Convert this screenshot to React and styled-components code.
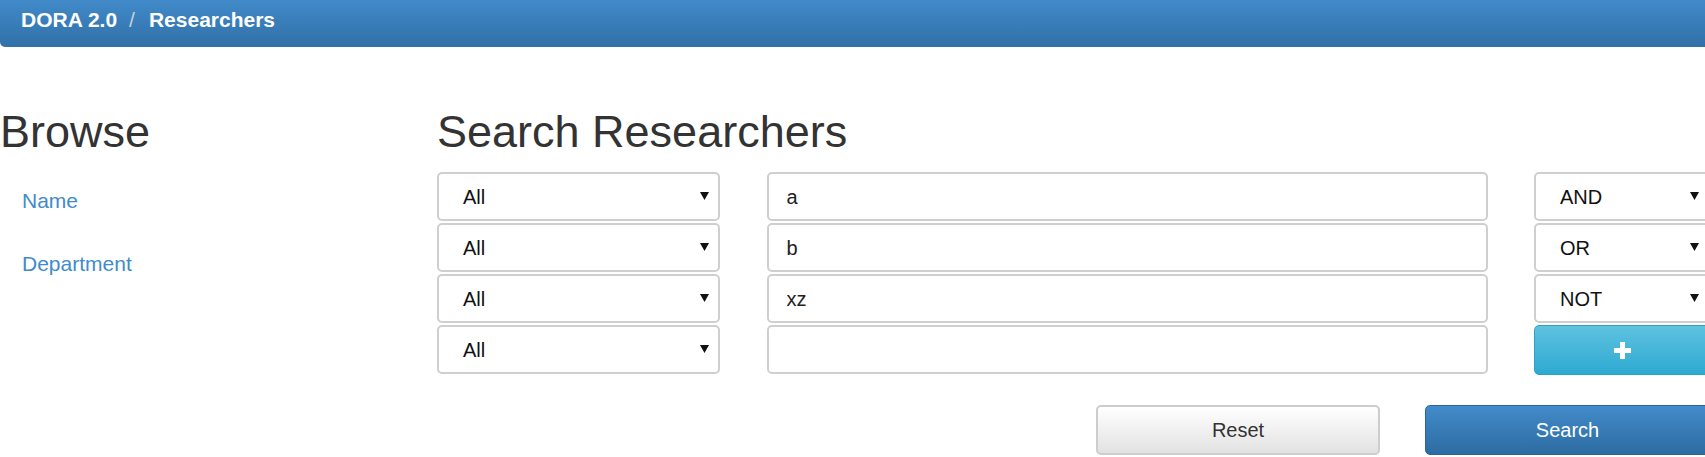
import React from 'react';
import styled, { createGlobalStyle } from 'styled-components';

const GlobalStyle = createGlobalStyle`
    html, body {
        margin: 0;
        padding: 0;
        background: #fff;
        overflow: hidden;
    }
    body {
        font-family: "Liberation Sans", Arial, sans-serif;
        color: #333;
    }
    * {
        box-sizing: border-box;
    }
`;

const criteria = [
    { field: 'All', term: 'a', op: 'AND' },
    { field: 'All', term: 'b', op: 'OR' },
    { field: 'All', term: 'xz', op: 'NOT' },
    { field: 'All', term: '', op: null },
];

const Arrow = () => (
    <svg width="9" height="8" viewBox="0 0 9 8">
        <path d="M0 0 L9 0 L4.5 8 Z" fill="#111" />
    </svg>
);

const PlusIcon = () => (
    <svg width="17" height="17" viewBox="0 0 17 17">
        <rect x="6" y="0" width="5" height="17" fill="#fff" />
        <rect x="0" y="6" width="17" height="5" fill="#fff" />
    </svg>
);

const App = () => {
    return (
        <>
            <GlobalStyle />
            <TopBar>
                <Crumb>DORA 2.0</Crumb>
                <Divider>/</Divider>
                <Crumb>Researchers</Crumb>
            </TopBar>
            <Main>
                <Sidebar>
                    <Heading>Browse</Heading>
                    <NavList>
                        <NavLink href="#">Name</NavLink>
                        <NavLink href="#">Department</NavLink>
                    </NavList>
                </Sidebar>
                <SearchPanel>
                    <Heading>Search Researchers</Heading>
                    <CriteriaGrid>
                        {criteria.map((row, i) => (
                            <React.Fragment key={i}>
                                <SelectBox>
                                    <span>{row.field}</span>
                                    <Arrow />
                                </SelectBox>
                                <TermInput defaultValue={row.term} />
                                {row.op
                                    ? <SelectBox>
                                        <span>{row.op}</span>
                                        <Arrow />
                                    </SelectBox>
                                    : <Button variant="info"><PlusIcon /></Button>
                                }
                            </React.Fragment>
                        ))}
                    </CriteriaGrid>
                    <Actions>
                        <Button variant="default">Reset</Button>
                        <Button variant="primary">Search</Button>
                    </Actions>
                </SearchPanel>
            </Main>
        </>
    );
};

const TopBar = styled.div`
    display: flex;
    align-items: flex-start;
    width: 1720px;
    height: 47px;
    padding: 8px 0 0 21px;
    background: linear-gradient(to bottom, #418ac9 0%, #3070a8 100%);
    border-radius: 0 0 0 5px;
    font-size: 21px;
    font-weight: bold;
    line-height: 23px;
    color: #fff;
`;

const Crumb = styled.span`
    color: #fff;
`;

const Divider = styled.span`
    margin: 0 14px 0 12px;
    font-weight: normal;
    color: #c4cfdc;
`;

const Main = styled.div`
    display: grid;
    grid-template-columns: 437px 1273px;
    margin-top: 61px;
`;

const Sidebar = styled.div`
    display: flex;
    flex-direction: column;
`;

const Heading = styled.h1`
    margin: 0;
    font-size: 45px;
    font-weight: normal;
    line-height: 48px;
    color: #333;
`;

const NavList = styled.nav`
    display: flex;
    flex-direction: column;
    gap: 39px;
    margin-top: 33px;
    padding-left: 22px;
`;

const NavLink = styled.a`
    font-size: 21px;
    line-height: 24px;
    color: #428bca;
    text-decoration: none;
`;

const SearchPanel = styled.div`
    display: flex;
    flex-direction: column;
`;

const CriteriaGrid = styled.div`
    display: grid;
    grid-template-columns: 283px 721px 176px;
    grid-auto-rows: 49px;
    column-gap: 46.5px;
    row-gap: 2px;
    margin-top: 16px;
`;

const SelectBox = styled.div`
    display: flex;
    align-items: center;
    justify-content: space-between;
    height: 49px;
    padding: 0 9px 0 24px;
    border: 2px solid #cfcfcf;
    border-radius: 5px;
    background: #fff;
    font-size: 20px;
    line-height: 20px;
    color: #111;

    svg {
        margin-top: -2px;
    }
`;

const TermInput = styled.input`
    height: 49px;
    padding: 1px 18px 0 18px;
    border: 2px solid #cfcfcf;
    border-radius: 5px;
    font-family: "Liberation Sans", Arial, sans-serif;
    font-size: 20px;
    color: #222;
    outline: none;
`;

const variants = {
    default: 'background: linear-gradient(to bottom, #fff 0%, #e2e2e2 100%); border: 2px solid #cdcdcd; color: #333;',
    primary: 'background: linear-gradient(to bottom, #428bca 0%, #2d6ca2 100%); border: 1px solid #2b669a; color: #fff;',
    info: 'background: linear-gradient(to bottom, #5fc2df 0%, #2eaad2 100%); border: 1px solid #28a4c9; color: #fff;',
};

const Button = styled.button`
    display: flex;
    align-items: center;
    justify-content: center;
    height: 50px;
    padding: 0;
    border-radius: 5px;
    font-family: "Liberation Sans", Arial, sans-serif;
    font-size: 20px;
    cursor: pointer;
    ${p => variants[p.variant]}
`;

const Actions = styled.div`
    display: grid;
    grid-template-columns: 284px 285px;
    justify-content: end;
    column-gap: 45px;
    margin-top: 31px;
`;

export default App;
